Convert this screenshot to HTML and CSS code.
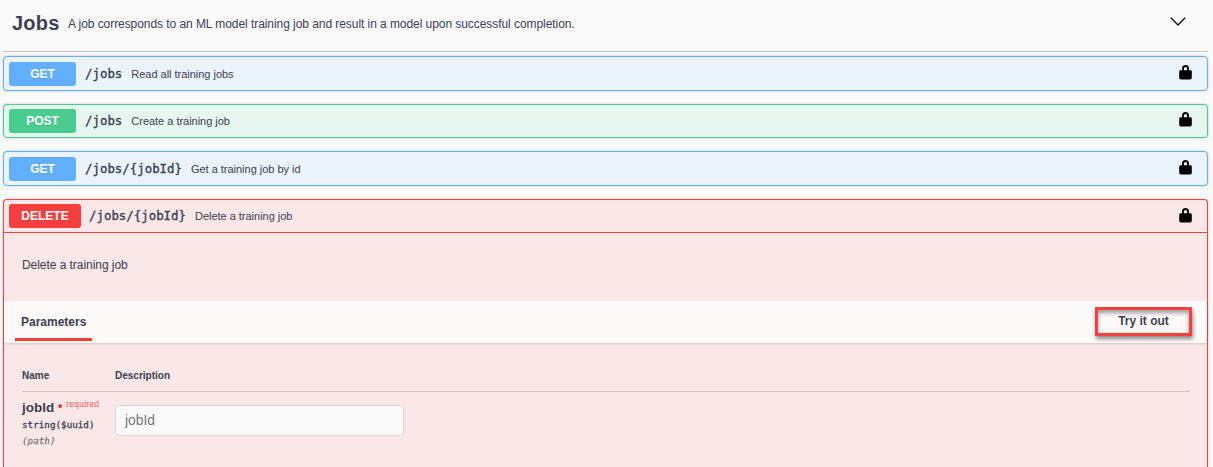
FILE: index.html
```html
<!DOCTYPE html>
<html lang="en">
<head>
<meta charset="utf-8">
<title>Jobs</title>
<link rel="stylesheet" href="styles.css">
</head>
<body>
<svg class="defs" width="0" height="0"><symbol id="lock" viewBox="0 0 13 15"><path d="M1.6 5.300H3V3.500a3.500 3.500 0 0 1 7 0v1.800h1.400q1.400 0 1.400 1.400v6.100q0 1.700-1.700 1.700H1.900Q.2 14.500.2 12.800V6.700q0-1.400 1.400-1.400zM4.900 5.300h3.200V3.500a1.600 1.600 0 0 0-3.200 0z"/></symbol></svg>
<main class="section">
  <header class="tag">
    <h1 class="tag-name">Jobs</h1>
    <p class="tag-text">A job corresponds to an ML model training job and result in a model upon successful completion.</p>
    <svg class="chevron" viewBox="0 0 16 9"><path d="M.8.8 8 8 15.200.8"/></svg>
  </header>
  <div class="op get">
    <div class="summary"><span class="method">GET</span><span class="path">/jobs</span><span class="summary-text">Read all training jobs</span><svg class="lock"><use href="#lock"/></svg></div>
  </div>
  <div class="op post">
    <div class="summary"><span class="method">POST</span><span class="path">/jobs</span><span class="summary-text">Create a training job</span><svg class="lock"><use href="#lock"/></svg></div>
  </div>
  <div class="op get">
    <div class="summary"><span class="method">GET</span><span class="path">/jobs/{jobId}</span><span class="summary-text">Get a training job by id</span><svg class="lock"><use href="#lock"/></svg></div>
  </div>
  <div class="op delete">
    <div class="summary"><span class="method">DELETE</span><span class="path">/jobs/{jobId}</span><span class="summary-text">Delete a training job</span><svg class="lock"><use href="#lock"/></svg></div>
    <p class="description">Delete a training job</p>
    <div class="params-header"><h2 class="tab">Parameters</h2><button class="try">Try it out</button></div>
    <div class="params">
      <div class="row head"><span>Name</span><span>Description</span></div>
      <div class="row">
        <div class="param">
          <div class="param-name">jobId<span class="star">*</span><span class="required">required</span></div>
          <div class="type">string($uuid)</div>
          <div class="in">(path)</div>
        </div>
        <input class="field" placeholder="jobId">
      </div>
    </div>
  </div>
</main>
</body>
</html>
```
FILE: styles.css
```css
* { box-sizing: border-box; }
body { margin: 0; height: 467px; overflow: hidden; background: #fafafa; color: #3b4151; font-family: "Liberation Sans", Arial, sans-serif; }
h1, h2, p { margin: 0; }
.defs { display: block; height: 0; }
.section { width: 1205px; height: 467px; margin-left: 3px; }
.tag { display: flex; align-items: center; height: 52px; padding: 0 22px 6px 9px; border-bottom: 1px solid #c1c2c5; white-space: nowrap; }
.tag-name { width: 56px; font-size: 20px; line-height: 24px; letter-spacing: .2px; }
.tag-text { font-size: 12px; line-height: 16px; padding-top: 2px; letter-spacing: -.062px; }
.chevron { width: 16px; height: 9px; margin: 0 0 3px auto; fill: none; stroke: #111; stroke-width: 1.4; }
.op { border: 1px solid; border-radius: 4px; box-shadow: 0 0 3px rgba(0, 0, 0, .19); }
.get { height: 35px; margin: 4px 0 13px; border-color: #61affe; background: #ebf3fb; }
.post { height: 34px; margin-bottom: 13px; border-color: #49cc90; background: #e8f6f0; }
.delete { height: 268px; border-color: #f93e3e; border-bottom: 0; border-radius: 4px 4px 0 0; background: #fae7e7; }
.summary { display: flex; align-items: center; height: 33px; padding: 0 15px 0 5px; white-space: nowrap; }
.post .summary { height: 32px; }
.delete .summary { border-bottom: 1px solid #f93e3e; }
.method { min-width: 67px; height: 24px; margin-right: 9px; border-radius: 3px; color: #fff; font-size: 12px; font-weight: 700; line-height: 24px; text-align: center; text-shadow: 0 1px 0 rgba(0, 0, 0, .1); }
.get .method { background: #61affe; }
.post .method { background: #49cc90; }
.delete .method { min-width: 72px; margin-right: 8px; background: #f93e3e; }
.path { margin-right: 9px; font: 400 12.4px/18px "DejaVu Sans Mono", monospace; -webkit-text-stroke: .35px #3b4151; }
.summary-text { font-size: 11px; line-height: 16px; letter-spacing: -.02px; }
.lock { width: 13px; height: 15px; margin: 0 0 3px auto; }
.delete .lock { margin-bottom: 2px; }
.description { height: 68px; padding: 24px 17px 0 18px; font-size: 12px; line-height: 16px; letter-spacing: -.05px; }
.params-header { display: flex; justify-content: space-between; height: 42px; padding: 0 15px 0 11px; background: #fffafa; box-shadow: 0 1px 2px rgba(0, 0, 0, .15); }
.tab { height: 40px; padding: 13px 6px 0; border-bottom: 3px solid #f93e3e; font-size: 12px; line-height: 16px; }
.try { width: 97px; height: 29px; margin-top: 6px; padding: 0 0 2px; border: 3px solid #f93e3e; background: transparent; color: #3b4151; font: 700 12px/16px "Liberation Sans", Arial, sans-serif; box-shadow: 1px 3px 4px rgba(0, 0, 0, .45), inset 0 3px 4px rgba(0, 0, 0, .38); }
.params { padding: 23px 17px 0 18px; }
.row { display: grid; grid-template-columns: 93px 1fr; }
.head { height: 26px; border-bottom: 1px solid #d5c6cb; font-size: 10px; font-weight: 700; line-height: 20px; }
.param { padding-top: 7px; white-space: nowrap; }
.param-name { height: 18px; font-size: 13.500px; font-weight: 700; line-height: 18px; }
.star { margin-left: 4px; color: #f00; font-size: 10px; }
.required { margin-left: 4px; color: #ff5555; font-size: 8.500px; font-weight: 400; vertical-align: 5px; line-height: 8px; letter-spacing: .25px; }
.type, .in { font: 400 9.270px/16px "DejaVu Sans Mono", monospace; -webkit-text-stroke: .3px; }
.in { color: #808080; font-style: italic; }
.field { width: 289px; height: 31px; margin-top: 13px; padding: 0 9px; border: 1px solid #d9d9d9; border-radius: 4px; background: #fafafa; font: 13.800px "Liberation Sans", Arial, sans-serif; }
.field::placeholder { color: #757575; }
```
